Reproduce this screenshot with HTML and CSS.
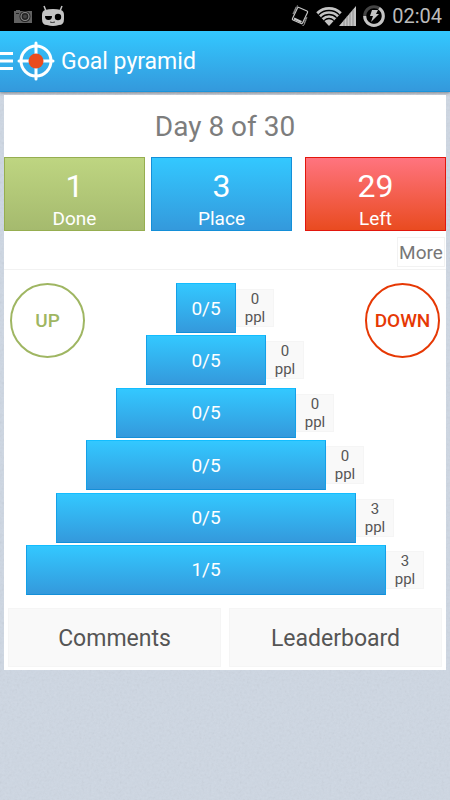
FILE: index.html
```html
<!DOCTYPE html>
<html lang="en">
<head>
  <meta charset="UTF-8">
  <meta name="viewport" content="width=device-width, initial-scale=1.0">
  <title>Goal pyramid</title>
  <link rel="stylesheet" href="styles.css">
</head>
<body>

<div class="status-bar">
  <svg width="20" height="16" viewBox="0 0 20 16" aria-hidden="true">
    <path d="M1 3h2V2h4v1h12v12H1z" fill="#626262"/>
    <circle cx="12" cy="8.500" r="5.500" fill="#222"/>
    <circle cx="12" cy="8.500" r="4" fill="none" stroke="#888" stroke-width="1.200"/>
    <circle cx="12" cy="8.500" r="2" fill="#444"/>
    <path d="M3 5.500h3" stroke="#222" stroke-width="1"/>
  </svg>
  <svg width="24" height="22" viewBox="0 0 24 22" aria-hidden="true">
    <path d="M3 1l2 5M21 1l-2 5" stroke="#c4c4c4" stroke-width="1.500"/>
    <path d="M4 5Q12 3 20 5Q23 6 23 10V14Q23 20 18 20Q12 22 6 20Q1 20 1 14V10Q1 6 4 5z" fill="#c4c4c4"/>
    <path d="M4 11h7q0 4-3.500 4T4 11z" fill="#000"/>
    <circle cx="17" cy="12" r="3.200" fill="#000"/>
    <path d="M9 17q2 1 5 0" fill="none" stroke="#333" stroke-width="1"/>
  </svg>
  <div class="status-right">
    <svg width="18" height="22" viewBox="0 0 18 22" aria-hidden="true">
      <path d="M8 2.500L16 6Q17 6.500 16.500 7.500L11.500 18Q11 19 10 18.500L2 15Q1 14.500 1.500 13.500L6.500 3Q7 2 8 2.500z" fill="none" stroke="#c4c4c4" stroke-width="1.200"/>
      <path d="M3 13.500L10.500 17" stroke="#c4c4c4" stroke-width="2"/>
      <path d="M7 .800L5.500 1.500L2 9M5 3L3 8M11.500 20.500L13 20L16 12M13 18L15 13" fill="none" stroke="#999" stroke-width="1.200" stroke-dasharray="1.500 .600"/>
    </svg>
    <svg class="wifi" width="26" height="20" viewBox="0 0 26 20" aria-hidden="true">
      <defs>
        <clipPath id="fan"><path d="M0 6V0h26v6L13 20z"/></clipPath>
      </defs>
      <g clip-path="url(#fan)">
        <circle cx="13" cy="19" r="18" fill="#c4c4c4"/>
        <g fill="none" stroke="#000" stroke-width="1.300">
          <circle cx="13" cy="19" r="14.500"/>
          <circle cx="13" cy="19" r="10.500"/>
          <circle cx="13" cy="19" r="6.500"/>
        </g>
      </g>
    </svg>
    <svg class="signal" width="18" height="20" viewBox="0 0 18 20" aria-hidden="true">
      <path d="M17 0v20H0z" fill="#c4c4c4"/>
      <path d="M5 14v6M8 10.500v9.500M11 7v13M14 3.500v16.500" stroke="#777" stroke-width=".7"/>
    </svg>
    <svg class="battery" width="22" height="22" viewBox="0 0 22 22" aria-hidden="true">
      <circle cx="11" cy="11" r="9.300" fill="none" stroke="#444" stroke-width="3"/>
      <path d="M16 3.200A9.300 9.300 0 1 1 1.700 11" fill="none" stroke="#c4c4c4" stroke-width="3"/>
      <path d="M9 5h6l-2 4h3L8 17l2-6H7z" fill="#c4c4c4"/>
    </svg>
    <time class="clock">02:04</time>
  </div>
</div>

<header class="app-bar">
  <svg class="menu" width="13" height="20" viewBox="0 0 13 20" aria-hidden="true">
    <path d="M0 2.500h13M0 10h13M0 17.500h13" stroke="#fff" stroke-width="3"/>
  </svg>
  <svg class="logo" width="38" height="40" viewBox="0 0 38 40" aria-hidden="true">
    <circle cx="19" cy="20" r="15" fill="none" stroke="#fff" stroke-width="3"/>
    <path d="M19 2v36M2 20h34" stroke="#fff" stroke-width="3" stroke-linecap="round"/>
    <circle cx="19" cy="20" r="7.500" fill="#ea4c1e"/>
  </svg>
  <h1>Goal pyramid</h1>
</header>

<main class="card">
  <h2>Day 8 of 30</h2>

  <div class="stats">
    <div class="stat done"><span class="number">1</span><span>Done</span></div>
    <div class="stat place"><span class="number">3</span><span>Place</span></div>
    <div class="stat left"><span class="number">29</span><span>Left</span></div>
  </div>

  <div class="more-row">
    <button class="more">More</button>
  </div>

  <div class="board">
    <div class="pyramid">
      <div class="level"><button class="bar w1">0/5</button><span class="people">0<br>ppl</span></div>
      <div class="level"><button class="bar w2">0/5</button><span class="people">0<br>ppl</span></div>
      <div class="level"><button class="bar w3">0/5</button><span class="people">0<br>ppl</span></div>
      <div class="level"><button class="bar w4">0/5</button><span class="people">0<br>ppl</span></div>
      <div class="level"><button class="bar w5">0/5</button><span class="people">3<br>ppl</span></div>
      <div class="level"><button class="bar w6">1/5</button><span class="people">3<br>ppl</span></div>
    </div>
    <button class="round up">UP</button>
    <button class="round down">DOWN</button>
  </div>

  <div class="actions">
    <button>Comments</button>
    <button>Leaderboard</button>
  </div>
</main>

</body>
</html>
```

FILE: styles.css
```css
* {
  box-sizing: border-box;
}
body {
  margin: 0;
  min-height: 100vh;
  font-family: Roboto, sans-serif;
  background-color: #ced7e3;
  background-image: url("data:image/svg+xml,%3Csvg xmlns='http://www.w3.org/2000/svg' width='120' height='120'%3E%3Cfilter id='n'%3E%3CfeTurbulence type='fractalNoise' baseFrequency='.4' numOctaves='2' stitchTiles='stitch'/%3E%3CfeColorMatrix type='saturate' values='0'/%3E%3C/filter%3E%3Crect width='120' height='120' filter='url(%23n)' opacity='.14'/%3E%3C/svg%3E");
}
button {
  padding: 0;
  border: 0;
  background: none;
  font-family: inherit;
  cursor: pointer;
}
svg {
  display: block;
  flex: none;
}

.status-bar {
  display: flex;
  align-items: center;
  gap: 8px;
  height: 31px;
  padding: 0 8px 0 13px;
  background: #000;
}
.status-right {
  display: flex;
  align-items: center;
  margin-left: auto;
}
.wifi {
  margin: 0 -3px 0 7px;
}
.battery {
  margin: 0 7px 0 6px;
}
.clock {
  color: #bbb;
  font-size: 20px;
}

.app-bar {
  display: flex;
  align-items: center;
  height: 61px;
  border-bottom: 1px solid #1b94dc;
  background: linear-gradient(#33c8ff, #3499dc);
  box-shadow: 0 1px 3px rgba(0, 0, 0, 0.4);
}
.logo {
  margin: 0 6px 0 4px;
}
h1 {
  margin: 0;
  color: #fff;
  font-size: 23px;
  font-weight: 400;
}

.card {
  margin: 3px 4px 0;
  padding-bottom: 3px;
  background: #fff;
}
h2 {
  margin: 0;
  padding-top: 2px;
  color: #7d7d7d;
  font-size: 28px;
  font-weight: 400;
  line-height: 60px;
  text-align: center;
}

.stats {
  display: grid;
  grid-template-columns: 1fr 1fr 1fr;
  padding-right: 19px;
}
.stat {
  display: flex;
  flex-direction: column;
  align-items: center;
  height: 74px;
  padding-top: 8px;
  border: 1px solid;
  color: #fff;
  font-size: 19px;
  line-height: 26px;
}
.number {
  font-size: 32px;
  line-height: 40px;
}
.done {
  border-color: #96ae50;
  background: linear-gradient(#bed581, #a5ba6e);
}
.place {
  margin: 0 -6px 0 6px;
  border-color: #148fd8;
  background: linear-gradient(#33c8ff, #3499dc);
}
.left {
  margin: 0 -19px 0 19px;
  border-color: #e2160c;
  background: linear-gradient(#ff747f, #e94b20);
}

.more-row {
  display: flex;
  justify-content: flex-end;
  padding: 6px 1px 2px;
  border-bottom: 1px solid #f2f2f2;
}
.more {
  width: 48px;
  height: 30px;
  border: 1px solid #f2f2f2;
  color: #777;
  font-size: 19px;
}

.board {
  display: grid;
  grid-template-columns: 75px 1fr 75px;
  padding: 13px 6px;
}
.pyramid {
  grid-area: 1 / 1 / 2 / 4;
  display: flex;
  flex-direction: column;
  justify-content: space-between;
  height: 312px;
}
.level {
  display: flex;
  align-items: center;
  justify-content: center;
}
.bar {
  height: 50px;
  border: 1px solid #14a0e8;
  border-top-color: #12bdff;
  border-bottom-color: #148fd8;
  background: linear-gradient(#33c8ff, #3499dc);
  color: #fff;
  font-size: 19px;
}
.w1 { width: 60px; }
.w2 { width: 120px; }
.w3 { width: 180px; }
.w4 { width: 240px; }
.w5 { width: 300px; }
.w6 { width: 360px; }
.people {
  width: 38px;
  border: 1px solid #f5f5f5;
  background: #f9f9f9;
  color: #555;
  font-size: 15px;
  line-height: 18px;
  text-align: center;
}
.round {
  height: 75px;
  border: 2px solid;
  border-radius: 50%;
  font-size: 19px;
  font-weight: 500;
}
.up {
  grid-area: 1 / 1;
  color: #9fb662;
}
.down {
  grid-area: 1 / 3;
  color: #e63804;
}

.actions {
  display: grid;
  grid-template-columns: 1fr 1fr;
  gap: 8px;
  padding: 0 4px;
}
.actions button {
  height: 59px;
  padding-top: 2px;
  border: 1px solid #f5f5f5;
  background: #f9f9f9;
  color: #555;
  font-size: 23px;
}
```
